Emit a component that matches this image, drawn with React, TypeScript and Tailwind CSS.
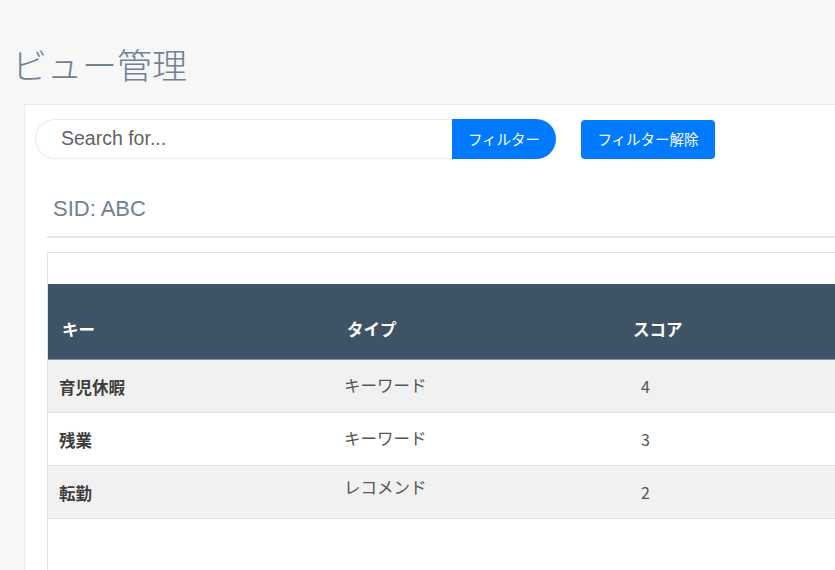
import React from "react";

const rows = [
  { key: "育児休暇", type: "キーワード", score: "4", alt: true, typeShift: false },
  { key: "残業", type: "キーワード", score: "3", alt: false, typeShift: false },
  { key: "転勤", type: "レコメンド", score: "2", alt: true, typeShift: true },
];

const jp = { fontFamily: '"Noto Sans CJK JP", "Noto Sans", sans-serif' };
const lat = { fontFamily: '"Liberation Sans", Arial, "Noto Sans CJK JP", sans-serif' };

export default function App() {
  return (
    <div className="w-[835px] h-[570px] overflow-hidden bg-[#f7f7f7]">
      <h1
        className="pt-[41px] pl-[12px] text-[35px] leading-[45px] font-light text-[#6f8193] whitespace-nowrap"
        style={jp}
      >
        ビュー管理
      </h1>
      <div className="ml-[24px] mt-[18px] w-[900px] h-[500px] bg-white border border-[#ebebeb] pt-[14px] pl-[10px]">
        <div className="flex items-center">
          <div className="flex w-[521px] h-[40px]">
            <div
              className="flex-1 flex items-center pl-[25px] rounded-l-full border border-r-0 border-[#ececec] text-[19.5px] text-[#5f6368]"
              style={lat}
            >
              Search for...
            </div>
            <button
              className="w-[104px] h-full bg-[#007bff] text-white text-[14.5px] rounded-r-full"
              style={jp}
            >
              フィルター
            </button>
          </div>
          <button
            className="ml-[25px] w-[134px] h-[39px] bg-[#007bff] text-white text-[14.5px] rounded-[4px]"
            style={jp}
          >
            フィルター解除
          </button>
        </div>
        <div className="ml-[12px]">
          <div className="pt-[38px] pb-[15px] pl-[6px] text-[22px] leading-[24px] text-[#6f8193]" style={lat}>
            SID: ABC
          </div>
          <div className="h-[2px] bg-[#e6e6e6]" />
          <div className="mt-[14px] border border-[#e3e3e3] h-[400px] pt-[31px]">
            <table className="w-[860px] border-collapse text-left" style={jp}>
              <colgroup>
                <col className="w-[285px]" />
                <col className="w-[297px]" />
                <col />
              </colgroup>
              <thead>
                <tr className="bg-[#3f5366] h-[75px] border-b border-[#8193a6]">
                  <th className="align-bottom pb-[17px] pl-[14px] text-[16.5px] font-bold text-white">キー</th>
                  <th className="align-bottom pb-[17px] pl-[14px] text-[16.5px] font-bold text-white">タイプ</th>
                  <th className="align-bottom pb-[17px] pl-[3px] text-[16.5px] font-bold text-white">スコア</th>
                </tr>
              </thead>
              <tbody>
                {rows.map((r) => (
                  <tr
                    key={r.key}
                    className={`h-[53px] border-b border-[#e3e3e3] ${r.alt ? "bg-[#f1f1f1]" : "bg-white"}`}
                  >
                    <td className="pl-[11px] pt-[4px] text-[16.5px] font-bold text-[#3d3d3d]">{r.key}</td>
                    <td
                      className={`pl-[11px] text-[16.5px] text-[#555] ${r.typeShift ? "align-top pt-[9px]" : "align-middle"}`}
                    >
                      {r.type}
                    </td>
                    <td className="pl-[11px] text-[16px] text-[#555]">{r.score}</td>
                  </tr>
                ))}
              </tbody>
            </table>
          </div>
        </div>
      </div>
    </div>
  );
}
